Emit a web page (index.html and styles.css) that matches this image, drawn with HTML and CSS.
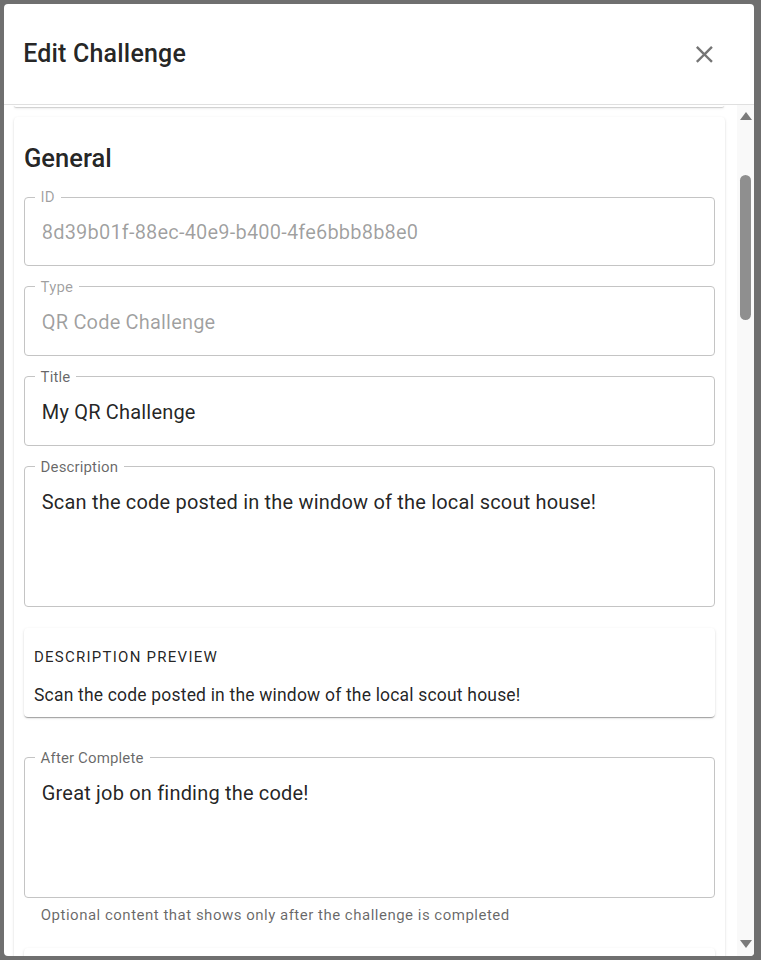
FILE: index.html
```html
<!DOCTYPE html>
<html lang="en">
<head>
<meta charset="utf-8">
<title>Edit Challenge</title>
<link rel="stylesheet" href="styles.css">
</head>
<body>
<div class="dialog" role="dialog">
  <header class="dlg-head">
    <h2 class="dlg-title">Edit Challenge</h2>
    <button class="close" aria-label="Close">
      <svg viewBox="0 0 24 24" width="28.8" height="28.8"><path fill="currentColor" d="M19 6.41 17.59 5 12 10.59 6.41 5 5 6.41 10.59 12 5 17.59 6.41 19 12 13.41 17.59 19 19 17.59 13.41 12z"/></svg>
    </button>
  </header>
  <div class="dlg-body">
    <div class="dlg-content">
      <div class="card-tail"></div>
      <section class="card">
        <h3 class="card-title">General</h3>
        <fieldset class="field disabled">
          <legend>ID</legend>
          <div class="value">8d39b01f-88ec-40e9-b400-4fe6bbb8b8e0</div>
        </fieldset>
        <fieldset class="field disabled">
          <legend>Type</legend>
          <div class="value">QR Code Challenge</div>
        </fieldset>
        <fieldset class="field">
          <legend>Title</legend>
          <div class="value">My QR Challenge</div>
        </fieldset>
        <fieldset class="field field-desc">
          <legend>Description</legend>
          <div class="value multi">Scan the code posted in the window of the local scout house!</div>
        </fieldset>
        <div class="preview">
          <div class="overline">Description preview</div>
          <p class="preview-text">Scan the code posted in the window of the local scout house!</p>
        </div>
        <fieldset class="field field-after">
          <legend>After Complete</legend>
          <div class="value multi">Great job on finding the code!</div>
        </fieldset>
        <p class="helper">Optional content that shows only after the challenge is completed</p>
        <div class="subcard"></div>
      </section>
    </div>
    <div class="scrollbar" aria-hidden="true">
      <div class="sb-btn sb-up"><span class="tri-up"></span></div>
      <div class="sb-track"><div class="sb-thumb"></div></div>
      <div class="sb-btn sb-down"><span class="tri-down"></span></div>
    </div>
  </div>
</div>
</body>
</html>
```
FILE: styles.css
```css
* { box-sizing: border-box; }

html, body {
  margin: 0;
  height: 960px;
  overflow: hidden;
}

body {
  background: #6f6f6f;
  padding: 4px 7px 4px 4px;
  font-family: Roboto, "Liberation Sans", Arial, sans-serif;
  color: rgba(0, 0, 0, 0.87);
}

.dialog {
  width: 750px;
  height: 952px;
  background: #fff;
  border-radius: 4px;
  display: flex;
  flex-direction: column;
  overflow: hidden;
}

.dlg-head {
  flex: none;
  height: 100px;
  display: flex;
  align-items: center;
  justify-content: space-between;
  padding: 0 26px 0 19.2px;
}

.dlg-title {
  margin: 0;
  font-size: 25px;
  font-weight: 500;
  line-height: 1.6;
  letter-spacing: 0.0075em;
  color: rgba(0, 0, 0, 0.87);
}

.close {
  border: 0;
  background: none;
  padding: 9.6px;
  margin: 0;
  color: rgba(0, 0, 0, 0.54);
  display: flex;
  cursor: pointer;
}
.close svg { display: block; }

.dlg-body {
  flex: 1;
  min-height: 0;
  display: flex;
  border-top: 1px solid #e0e0e0;
}

.dlg-content {
  flex: 1;
  min-width: 0;
  overflow: hidden;
  padding: 0 12px 0 10px;
}

.card-tail {
  height: 2px;
  margin: 0 1px 10px 0;
  background: #fff;
  border-radius: 0 0 4px 4px;
  box-shadow: 0 2px 1px -1px rgba(0,0,0,0.2), 0 1px 1px 0 rgba(0,0,0,0.14), 0 1px 3px 0 rgba(0,0,0,0.12);
}

.card {
  background: #fff;
  border-radius: 4px;
  padding: 10px;
  box-shadow: 0 2px 1px -1px rgba(0,0,0,0.2), 0 1px 1px 0 rgba(0,0,0,0.14), 0 1px 3px 0 rgba(0,0,0,0.12);
}

.card-title {
  margin: 15px 0 16px;
  font-size: 25.5px;
  font-weight: 500;
  line-height: 32px;
  color: rgba(0, 0, 0, 0.87);
}

.field {
  margin: 0 0 14px;
  min-width: 0;
  border: 1px solid #c4c4c4;
  border-radius: 4px;
  padding: 0 9.6px 18.65px;
}

.field legend {
  padding: 0 6px;
  font-size: 15px;
  line-height: 14px;
  letter-spacing: 0.00938em;
  color: rgba(0, 0, 0, 0.6);
}

.field .value {
  padding: 13.6px 7.2px 0;
  font-size: 20px;
  line-height: 28.75px;
  letter-spacing: 0.00938em;
  color: rgba(0, 0, 0, 0.87);
  white-space: nowrap;
}

.field .value.multi {
  height: 113.35px;
  white-space: normal;
}

.field.disabled legend { color: rgba(0, 0, 0, 0.38); }
.field.disabled .value { color: rgba(0, 0, 0, 0.38); }

.field-desc { margin-bottom: 21px; }

.preview {
  margin-bottom: 34px;
  padding: 10px;
  border-radius: 4px;
  background: #fff;
  box-shadow: 0 2px 1px -1px rgba(0,0,0,0.2), 0 1px 1px 0 rgba(0,0,0,0.14), 0 1px 3px 0 rgba(0,0,0,0.12);
}

.overline {
  font-size: 15px;
  line-height: 38px;
  letter-spacing: 0.08333em;
  text-transform: uppercase;
  color: rgba(0, 0, 0, 0.87);
}

.preview-text {
  margin: 7px 0 0;
  font-size: 17.5px;
  line-height: 24px;
  letter-spacing: 0.01071em;
  color: rgba(0, 0, 0, 0.87);
}

.field-after { margin-bottom: 0; }

.helper {
  margin: 5.5px 16.8px 0;
  font-size: 15px;
  line-height: 1.66;
  letter-spacing: 0.03333em;
  color: rgba(0, 0, 0, 0.6);
}

.subcard {
  margin-top: 20px;
  height: 40px;
  border-radius: 4px;
  background: #fff;
  box-shadow: 0 2px 1px -1px rgba(0,0,0,0.2), 0 1px 1px 0 rgba(0,0,0,0.14), 0 1px 3px 0 rgba(0,0,0,0.12);
}

/* scrollbar */
.scrollbar {
  flex: none;
  width: 17px;
  background: #f9f9f9;
  display: flex;
  flex-direction: column;
  align-items: center;
}

.sb-btn {
  flex: none;
  height: 17px;
  width: 100%;
  display: flex;
  align-items: center;
  justify-content: center;
}
.sb-up { margin-top: 2px; }
.sb-down { margin-bottom: 4px; }

.tri-up {
  width: 0;
  height: 0;
  border-left: 6.5px solid transparent;
  border-right: 6.5px solid transparent;
  border-bottom: 8px solid #7a7a7a;
}
.tri-down {
  width: 0;
  height: 0;
  border-left: 6.5px solid transparent;
  border-right: 6.5px solid transparent;
  border-top: 8px solid #7a7a7a;
}

.sb-track {
  flex: 1;
  width: 100%;
  display: flex;
  justify-content: center;
}

.sb-thumb {
  margin-top: 51px;
  width: 11px;
  height: 145px;
  border-radius: 6px;
  background: #8f8f8f;
}
```
